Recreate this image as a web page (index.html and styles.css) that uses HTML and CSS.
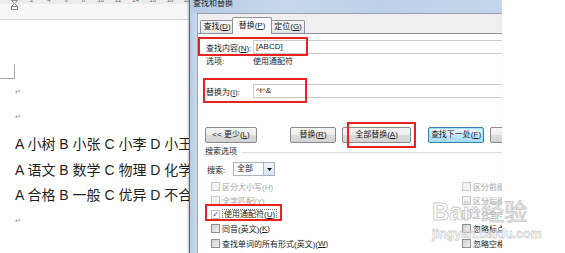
FILE: index.html
```html
<!DOCTYPE html>
<html lang="zh-CN">
<head>
<meta charset="utf-8">
<title>查找和替换</title>
<link rel="stylesheet" href="styles.css">
</head>
<body>
<div class="screen">
  <div class="doc">
    <div class="ruler">
      <div class="ticks">
        <svg class="indent" width="7" height="10" viewBox="0 0 7 10"><path d="M0.5 0.5H6.5L3.5 3.5Z M0.5 6.5L3.5 3.5L6.5 6.5Z" fill="#fff" stroke="#8a8a8a" stroke-width="1"/><rect x="0.5" y="6.5" width="6" height="3" fill="#fff" stroke="#8a8a8a" stroke-width="1"/></svg>
        <span>2</span><span>4</span><span>6</span><span>8</span><span>10</span><span>12</span><span>14</span><span>16</span><span>18</span><span>20</span>
      </div>
    </div>
    <div class="page">
      <div class="corner"></div>
      <div class="pm first">↵</div>
      <div class="pm">↵</div>
      <div class="lines">
        <p>A 小树 B 小张 C 小李 D 小王</p>
        <p>A 语文 B 数学 C 物理 D 化学</p>
        <p>A 合格 B 一般 C 优异 D 不合格</p>
      </div>
      <div class="pm">↵</div>
    </div>
  </div>

  <div class="dialog">
    <div class="titlebar">查找和替换</div>
    <div class="dbody">
      <div class="frame-left"></div>
      <div class="client">
        <div class="tabs">
          <div class="tab">查找(<u>D</u>)</div>
          <div class="tab active">替换(<u>P</u>)</div>
          <div class="tab last">定位(<u>G</u>)</div>
        </div>
        <div class="tabpage">
          <div class="field find">
            <span class="flabel">查找内容(<u>N</u>):</span>
            <div class="input">[ABCD]</div>
          </div>
          <div class="opts">
            <span class="flabel">选项:</span>
            <span>使用通配符</span>
          </div>
          <div class="field replace">
            <span class="flabel">替换为(<u>I</u>):</span>
            <div class="input">^t^&amp;</div>
          </div>
          <div class="buttons">
            <div class="btn less">&lt;&lt; 更少(<u>L</u>)</div>
            <div class="btn rep">替换(<u>R</u>)</div>
            <div class="btn all">全部替换(<u>A</u>)</div>
            <div class="btn next">查找下一处(<u>F</u>)</div>
            <div class="btn cancel">取消</div>
          </div>
          <div class="section">搜索选项</div>
          <div class="searchrow">
            <span class="slabel">搜索:</span>
            <div class="select"><span class="sval">全部</span><span class="drop"><svg width="5" height="3" viewBox="0 0 5 3"><path d="M0 0H5L2.5 3Z" fill="#111"/></svg></span></div>
          </div>
          <div class="checks">
            <div class="chk disabled"><span class="box"></span>区分大小写(H)</div>
            <div class="chk disabled"><span class="box"></span>区分前缀(X)</div>
            <div class="chk disabled"><span class="box"></span>全字匹配(Y)</div>
            <div class="chk disabled"><span class="box"></span>区分后缀(T)</div>
            <div class="chk checked"><span class="box">✓</span><span class="focus">使用通配符(<u>U</u>)</span></div>
            <div class="chk disabled"><span class="box"></span>区分全/半角(M)</div>
            <div class="chk"><span class="box"></span>同音(英文)(<u>K</u>)</div>
            <div class="chk"><span class="box"></span>忽略标点符号(S)</div>
            <div class="chk"><span class="box"></span>查找单词的所有形式(英文)(<u>W</u>)</div>
            <div class="chk"><span class="box"></span>忽略空格(W)</div>
          </div>

          <div class="mark m1"></div>
          <div class="mark m2"></div>
          <div class="mark m3"></div>
          <div class="mark m4"></div>
        </div>
      </div>
    </div>
  </div>

  <div class="watermark">
    <div class="wm-top"><span>Bai</span><svg class="paw" width="11" height="13" viewBox="0 0 11 13"><g fill="rgba(255,255,255,0.6)" stroke="#bcbcbc" stroke-width="0.8"><ellipse cx="2" cy="5" rx="1.4" ry="1.8"/><ellipse cx="4.3" cy="2.3" rx="1.3" ry="1.8"/><ellipse cx="7" cy="2.3" rx="1.3" ry="1.8"/><ellipse cx="9.2" cy="5" rx="1.4" ry="1.8"/><path d="M5.5 6.2C3.5 6.2 2 9 2.3 10.8C2.6 12.4 4.5 11.6 5.5 11.6C6.6 11.6 8.5 12.4 8.8 10.8C9.1 9 7.5 6.2 5.5 6.2Z"/></g></svg><span class="cn">经验</span></div>
    <div class="wm-url">jingyan.baidu.com</div>
  </div>
</div>
</body>
</html>
```

FILE: styles.css
```css
html, body {
  margin: 0;
  padding: 0;
  background: #ffffff;
}

.screen {
  position: relative;
  width: 565px;
  height: 253px;
  overflow: hidden;
  display: flex;
  background: #ffffff;
}

/* ---------- document side ---------- */
.doc {
  width: 189px;
  flex: none;
  overflow: hidden;
  background: #ffffff;
}

.ruler {
  height: 20px;
  background: #f6f6f6;
  border-bottom: 1px solid #d6d6d6;
  box-sizing: border-box;
}

.ticks {
  display: flex;
  align-items: flex-start;
  height: 10px;
  padding-left: 11px;
  background: linear-gradient(#ececec 0, #ececec 4px, transparent 4px);
}

.indent {
  flex: none;
  display: block;
  margin-top: 0;
  margin-right: 5px;
}

.ticks span {
  flex: none;
  width: 17.3px;
  text-align: center;
  font-family: "Liberation Sans", sans-serif;
  font-size: 6px;
  line-height: 6px;
  margin-top: -3px;
  color: #6a6a6a;
}

.page {
  padding-top: 44px;
}

.corner {
  width: 14px;
  height: 14px;
  border-right: 1px solid #a8a8a8;
  border-bottom: 1px solid #a8a8a8;
}

.pm {
  height: 25px;
  line-height: 25px;
  padding-left: 15px;
  font-family: "DejaVu Sans", sans-serif;
  font-size: 7px;
  color: #8c8c8c;
}

.pm.first {
  margin-top: 1px;
}

.lines {
  margin-top: 2px;
}

.lines p {
  margin: 0;
  padding-left: 15px;
  height: 25.5px;
  line-height: 25.5px;
  white-space: nowrap;
  font-family: "Liberation Sans", "Noto Sans CJK SC", sans-serif;
  font-size: 14px;
  color: #1e1e1e;
}

/* ---------- dialog ---------- */
.dialog {
  width: 312px;
  flex: none;
  display: flex;
  flex-direction: column;
  border-left: 1px solid #5b6877;
  box-shadow: -1px 0 2px rgba(0, 0, 0, 0.25);
  background: #c4d6ea;
  overflow: hidden;
  font-family: "Liberation Sans", "Noto Sans CJK SC", sans-serif;
  font-size: 8px;
  color: #1a1a1a;
}

.dialog u {
  text-decoration: underline;
  text-underline-offset: 1px;
}

.titlebar {
  height: 13px;
  flex: none;
  padding-left: 3px;
  line-height: 8px;
  font-size: 8px;
  color: #1c1c1c;
  background: linear-gradient(90deg, #b6cbe4 0%, #c6d7eb 30%, #bcd0e8 60%, #c3d5ea 100%);
}

.dbody {
  flex: 1;
  display: flex;
}

.frame-left {
  width: 7px;
  flex: none;
  background: linear-gradient(90deg, #b8cce4, #c8d9ec);
}

.client {
  flex: 1;
  display: flex;
  flex-direction: column;
  border-left: 1px solid #9aa5b3;
  border-top: 1px solid #98a3b1;
  background: #efefef;
}

.tabs {
  height: 19px;
  flex: none;
  display: flex;
  align-items: flex-end;
  padding-left: 2px;
}

.tab {
  position: relative;
  height: 13px;
  box-sizing: border-box;
  width: 34px;
  border: 1px solid #8d919a;
  border-bottom: none;
  border-radius: 2px 2px 0 0;
  background: linear-gradient(#f6f6f6, #e4e4e4);
  text-align: center;
  line-height: 12px;
  white-space: nowrap;
}

.tab.active {
  z-index: 2;
  width: 40px;
  height: 17px;
  margin-left: -2px;
  margin-bottom: -1px;
  background: #ffffff;
  line-height: 15px;
}

.tab.last {
  margin-left: -1px;
}

.tabpage {
  position: relative;
  flex: 1;
  background: #ffffff;
  border-top: 1px solid #8d919a;
}

.field {
  display: flex;
  align-items: center;
  height: 14px;
}

.field.find {
  margin-top: 6px;
}

.field.replace {
  margin-top: 17px;
}

.flabel {
  flex: none;
  width: 47px;
  padding-left: 8px;
  white-space: nowrap;
}

.input {
  flex: 1;
  height: 14px;
  box-sizing: border-box;
  border: 1px solid #cacaca;
  border-right: none;
  padding-left: 2px;
  line-height: 12px;
  background: #ffffff;
}

.opts {
  display: flex;
  margin-top: 3px;
  height: 10px;
  line-height: 10px;
}

.buttons {
  display: flex;
  margin-top: 29px;
  height: 16px;
}

.btn {
  flex: none;
  height: 16px;
  box-sizing: border-box;
  border: 1px solid #8a8a8a;
  border-radius: 2px;
  background: linear-gradient(#f4f4f4 0%, #ececec 48%, #dcdcdc 52%, #d2d2d2 100%);
  text-align: center;
  line-height: 14px;
  white-space: nowrap;
}

.btn.less { margin-left: 7px; width: 52px; }
.btn.rep { margin-left: 33px; width: 46px; }
.btn.all { margin-left: 6px; width: 69px; }
.btn.next {
  margin-left: 17px;
  width: 56px;
  border-color: #3c7fb1;
  background: linear-gradient(#eaf6fd 0%, #d9f0fc 48%, #bee6fd 52%, #a7d9f5 100%);
  box-shadow: inset 0 0 0 1px #9fe1fb;
}
.btn.cancel { margin-left: 6px; width: 50px; }

.section {
  display: flex;
  align-items: center;
  margin-top: 4px;
  height: 10px;
  line-height: 10px;
  padding-left: 7px;
  white-space: nowrap;
}

.section::after {
  content: "";
  flex: 1;
  margin-left: 4px;
  border-top: 1px solid #dadde2;
}

.searchrow {
  display: flex;
  align-items: center;
  margin-top: 5px;
  height: 14px;
}

.slabel {
  flex: none;
  width: 26px;
  padding-left: 9px;
  white-space: nowrap;
}

.select {
  display: flex;
  width: 42px;
  height: 14px;
  box-sizing: border-box;
  border: 1px solid #a8b2c0;
  background: #ffffff;
}

.sval {
  flex: 1;
  padding-left: 3px;
  line-height: 12px;
}

.drop {
  width: 10px;
  display: flex;
  align-items: center;
  justify-content: center;
  border-left: 1px solid #9db6d2;
  background: linear-gradient(#f2f7fc, #d6e4f2);
}

.drop svg {
  display: block;
}

.checks {
  display: grid;
  grid-template-columns: 251px 1fr;
  grid-auto-rows: 14.25px;
  margin-top: 3px;
  padding-left: 13px;
}

.chk {
  display: flex;
  align-items: center;
  white-space: nowrap;
  color: #1a1a1a;
}

.box {
  flex: none;
  width: 9px;
  height: 9px;
  box-sizing: border-box;
  margin-right: 2px;
  border: 1px solid #8e8f8f;
  background: linear-gradient(135deg, #cfcfcf, #f2f2f2);
  font-family: "DejaVu Sans", sans-serif;
  font-size: 8px;
  line-height: 7px;
  text-align: center;
  color: #2a3d6a;
}

.chk.disabled {
  color: #a3a3a3;
}

.chk.disabled .box {
  border-color: #c9c9c9;
  background: #f2f2f2;
}

.chk.checked .box {
  border-color: #c2c2c2;
  background: #ffffff;
}

.focus {
  border: 1px dotted #777777;
  padding: 0 1px;
  line-height: 9px;
}

/* red annotation boxes */
.mark {
  position: absolute;
  box-sizing: border-box;
  border: 2px solid #e8231f;
  pointer-events: none;
}

.m1 { left: 0; top: 3px; width: 110px; height: 19px; }
.m2 { left: 5px; top: 44px; width: 104px; height: 25px; }
.m3 { left: 149px; top: 88px; width: 69px; height: 26px; }
.m4 { left: 7px; top: 170px; width: 77px; height: 17px; }

/* watermark */
.watermark {
  position: absolute;
  left: 432px;
  top: 199px;
  width: 102px;
  pointer-events: none;
}

.wm-top {
  display: flex;
  align-items: center;
  height: 26px;
  font-family: "Liberation Sans", "Noto Sans CJK SC", sans-serif;
  font-weight: bold;
  font-size: 24px;
  line-height: 26px;
  color: rgba(255, 255, 255, 0.6);
  -webkit-text-stroke: 1px rgba(175, 175, 175, 0.65);
  white-space: nowrap;
}

.wm-top .cn {
  font-size: 23px;
  font-weight: normal;
  margin-left: 1px;
}

.paw {
  flex: none;
  display: block;
}

.wm-url {
  margin-top: 3px;
  font-family: "Liberation Sans", sans-serif;
  font-weight: bold;
  font-size: 12.5px;
  line-height: 12px;
  color: rgba(255, 255, 255, 0.6);
  -webkit-text-stroke: 0.8px rgba(180, 180, 180, 0.6);
  white-space: nowrap;
}
```
